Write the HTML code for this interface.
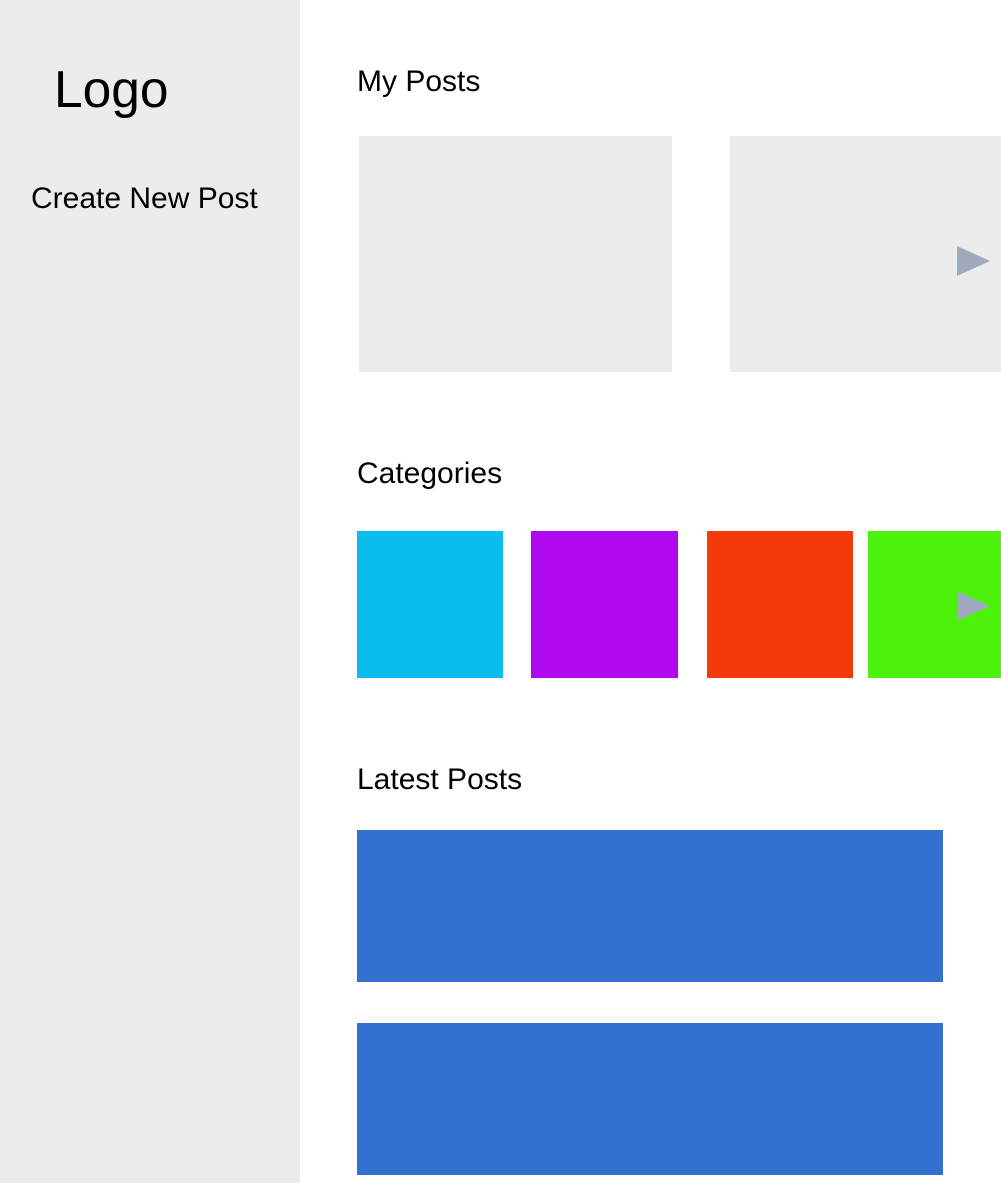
<!DOCTYPE html>
<html><head><meta charset="utf-8"><style>
*{margin:0;padding:0;box-sizing:border-box}
body{width:1001px;height:1183px;position:relative;background:#fff;font-family:"Liberation Sans",Arial,sans-serif;overflow:hidden;color:#000}
div{position:absolute}
.t{font-size:30px;white-space:nowrap;line-height:1}
.tri{width:0;height:0;border-top:15px solid transparent;border-bottom:15px solid transparent;border-left:33px solid #9faabf}
</style></head><body>
<div style="left:0;top:0;width:300px;height:1183px;background:#ececec"></div>
<div class="t" style="left:54px;top:64px;font-size:51.5px">Logo</div>
<div class="t" style="left:31px;top:184px">Create New Post</div>
<div class="t" style="left:357px;top:67px">My Posts</div>
<div style="left:359px;top:136px;width:313px;height:236px;background:#ececec"></div>
<div style="left:730px;top:136px;width:271px;height:236px;background:#ececec"></div>
<div class="tri" style="left:957px;top:246px"></div>
<div class="t" style="left:357px;top:459px">Categories</div>
<div style="left:357px;top:531px;width:146px;height:147px;background:#09bdee"></div>
<div style="left:531px;top:531px;width:147px;height:147px;background:#b009ef"></div>
<div style="left:707px;top:531px;width:146px;height:147px;background:#f23a0a"></div>
<div style="left:868px;top:531px;width:133px;height:147px;background:#4cf20c"></div>
<div class="tri" style="left:957px;top:591px"></div>
<div class="t" style="left:357px;top:765px">Latest Posts</div>
<div style="left:357px;top:830px;width:586px;height:152px;background:#3371ce"></div>
<div style="left:357px;top:1023px;width:586px;height:152px;background:#3371ce"></div>
</body></html>
